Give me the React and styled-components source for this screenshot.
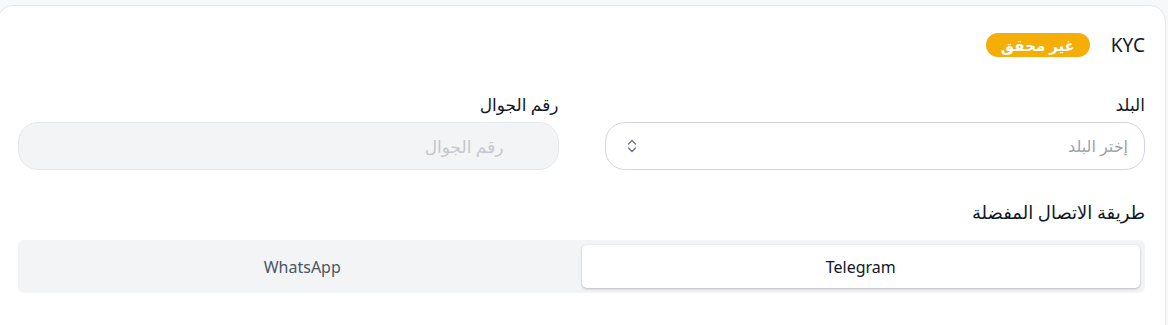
import React from 'react'
import styled, { createGlobalStyle } from 'styled-components'

const GlobalStyle = createGlobalStyle`
  html, body {
    margin: 0;
    padding: 0;
    background: #f7f8fa;
    font-family: "Noto Sans", "DejaVu Sans", sans-serif;
  }
  * { box-sizing: border-box; }
`

const Page = styled.div`
  padding-top: 5px;
  height: 325px;
  overflow: hidden;
`

const Card = styled.section`
  direction: rtl;
  width: 1169px;
  margin-left: -3px;
  background: #fff;
  border: 1px solid #e5e7eb;
  border-radius: 16px;
  padding: 20px 20px 60px;
  color: #111827;
`

const Header = styled.div`
  display: flex;
  align-items: center;
  gap: 21px;
  height: 38px;
  margin-bottom: 30px;
`

const Title = styled.span`
  font-size: 19px;
  color: #111827;
`

const Badge = styled.span`
  display: inline-flex;
  align-items: center;
  height: 24px;
  padding: 0 15px;
  border-radius: 999px;
  background: #f5ad07;
  color: #fff;
  font-size: 15px;
  font-weight: 700;
`

const Grid = styled.div`
  display: grid;
  grid-template-columns: 1fr 1fr;
  column-gap: 46px;
  margin-bottom: 32px;
`

const Field = styled.div`
  display: flex;
  flex-direction: column;
  gap: 7px;
`

const Label = styled.label`
  font-size: 17px;
  color: #111827;
  line-height: 21px;
`

const InputBox = styled.div`
  display: flex;
  align-items: center;
  justify-content: space-between;
  height: 48px;
  padding: 0 ${p => (p.$disabled ? '54px' : '16px')} 0 20px;
  border-radius: 20px;
  border: 1px solid ${p => (p.$disabled ? '#e5e7eb' : '#d1d5db')};
  background: ${p => (p.$disabled ? '#f3f4f6' : '#fff')};
  font-size: ${p => (p.$disabled ? '17px' : '16px')};
  color: ${p => (p.$disabled ? '#c4c7cc' : '#9ca3af')};
`

const Chevrons = styled.svg`
  width: 12px;
  height: 16px;
  color: #6b7280;
`

const SectionTitle = styled.div`
  font-size: 18px;
  line-height: 21px;
  margin-bottom: 17px;
`

const Tabs = styled.div`
  display: grid;
  grid-template-columns: 1fr 1fr;
  height: 53px;
  padding: 5px;
  background: #f3f4f6;
  border-radius: 6px;
`

const Tab = styled.button`
  border: 0;
  font-family: inherit;
  font-size: 16px;
  border-radius: 5px;
  cursor: pointer;
  background: ${p => (p.$active ? '#fff' : 'transparent')};
  color: ${p => (p.$active ? '#111827' : '#4b5563')};
  box-shadow: ${p => (p.$active ? '0 1px 3px rgba(0,0,0,0.18), 0 1px 2px rgba(0,0,0,0.08)' : 'none')};
`

export default function App() {
  const [method, setMethod] = React.useState('telegram')
  return (
    <Page>
      <GlobalStyle />
      <Card>
        <Header>
          <Title>KYC</Title>
          <Badge>غير محقق</Badge>
        </Header>
        <Grid>
          <Field>
            <Label>البلد</Label>
            <InputBox>
              <span>إختر البلد</span>
              <Chevrons viewBox="0 0 12 16" fill="none" stroke="currentColor" strokeWidth="1.3" strokeLinecap="round" strokeLinejoin="round">
                <path d="M2.5 6 L6 2.5 L9.5 6" />
                <path d="M2.5 10 L6 13.5 L9.5 10" />
              </Chevrons>
            </InputBox>
          </Field>
          <Field>
            <Label>رقم الجوال</Label>
            <InputBox $disabled>
              <span>رقم الجوال</span>
            </InputBox>
          </Field>
        </Grid>
        <SectionTitle>طريقة الاتصال المفضلة</SectionTitle>
        <Tabs>
          <Tab $active={method === 'telegram'} onClick={() => setMethod('telegram')}>Telegram</Tab>
          <Tab $active={method === 'whatsapp'} onClick={() => setMethod('whatsapp')}>WhatsApp</Tab>
        </Tabs>
      </Card>
    </Page>
  )
}
